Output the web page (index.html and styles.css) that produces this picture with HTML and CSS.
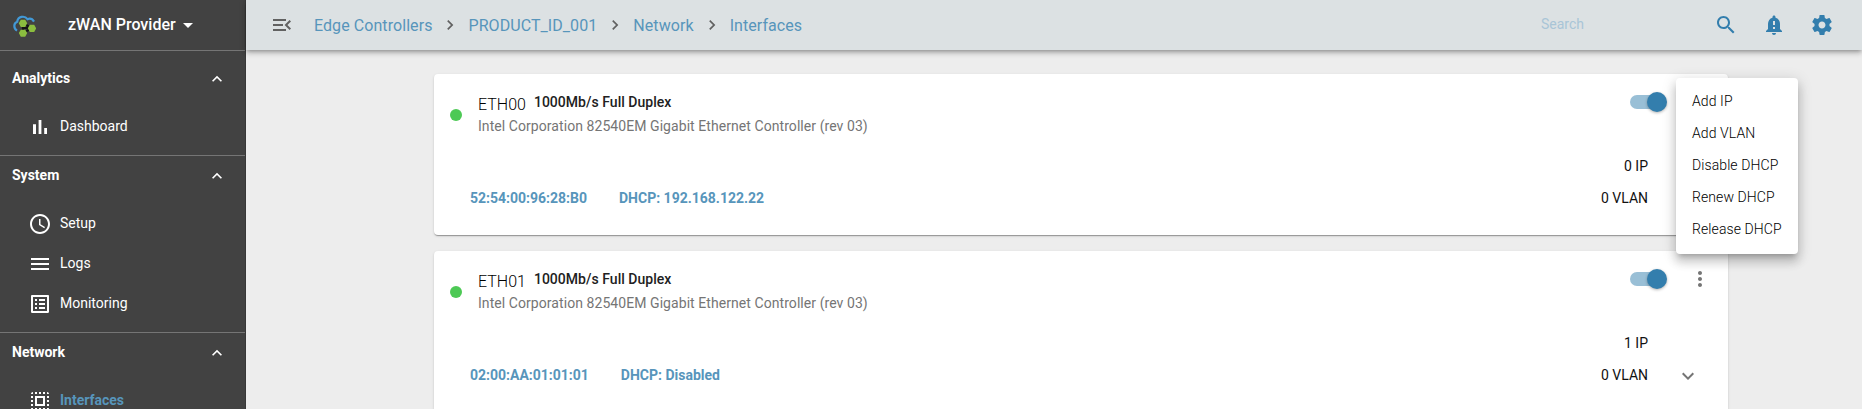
FILE: index.html
```html
<!DOCTYPE html>
<html lang="en">
<head>
<meta charset="utf-8">
<title>zWAN Provider</title>
<link rel="stylesheet" href="styles.css">
</head>
<body>
<div class="app">
  <aside class="sidebar">
    <div class="brand">
      <svg class="logo" width="24" height="24" viewBox="0 0 24 24">
        <path d="M5 16.600C1.600 14.500 1.200 9.500 5.200 7.800C5.800 2.500 12.500 1 15.500 5.200C18 4.200 20.500 5 22 7.600" fill="none" stroke="#4299d6" stroke-width="2.200"/>
        <path d="M11 9v10M11 9l8.500 5.300L11 19M11 14h8" fill="none" stroke="#151515" stroke-width="2.200"/>
        <path d="M8.800 5.700h4.400l2 3.600-2 3.600H8.800l-2-3.600zM8.800 15.700h4.400l2 3.400-2 3.600H8.800l-2-3.600zM17.800 10.700h4.400l2 3.600-2 3.600h-4.400l-2-3.600z" fill="#8bbd3f"/>
      </svg>
      <span class="brand-name">zWAN Provider</span>
      <svg class="icon" viewBox="0 0 24 24"><path d="M7 10l5 5 5-5z"/></svg>
    </div>
    <section class="group group-first">
      <div class="group-head">Analytics<svg class="chev" viewBox="0 0 24 24"><path d="M12 8l-6 6 1.410 1.410L12 10.830l4.590 4.580L18 14z"/></svg></div>
      <a class="item"><svg class="icon" viewBox="0 0 24 24"><path d="M5 9.200h3V19H5zM10.600 5h2.800v14h-2.800zm5.600 8H19v6h-2.800z"/></svg>Dashboard</a>
    </section>
    <section class="group">
      <div class="group-head">System<svg class="chev" viewBox="0 0 24 24"><path d="M12 8l-6 6 1.410 1.410L12 10.830l4.590 4.580L18 14z"/></svg></div>
      <a class="item"><svg class="icon" viewBox="0 0 24 24"><path d="M11.990 2C6.470 2 2 6.480 2 12s4.470 10 9.990 10C17.520 22 22 17.520 22 12S17.520 2 11.990 2zM12 20c-4.420 0-8-3.580-8-8s3.580-8 8-8 8 3.580 8 8-3.580 8-8 8zm.5-13H11v6l5.250 3.150.75-1.230-4.500-2.670z"/></svg>Setup</a>
      <a class="item"><svg class="icon" viewBox="0 0 24 24"><path d="M3 18h18v-2H3v2zm0-5h18v-2H3v2zm0-7v2h18V6H3z"/></svg>Logs</a>
      <a class="item"><svg class="icon" viewBox="0 0 24 24"><path d="M19 5v14H5V5h14m1.100-2H3.900c-.5 0-.9.400-.9.900v16.200c0 .400.400.900.900.900h16.200c.4 0 .9-.5.900-.9V3.900c0-.5-.5-.9-.9-.9zM11 7h6v2h-6V7zm0 4h6v2h-6v-2zm0 4h6v2h-6zM7 7h2v2H7zm0 4h2v2H7zm0 4h2v2H7z"/></svg>Monitoring</a>
    </section>
    <section class="group">
      <div class="group-head">Network<svg class="chev" viewBox="0 0 24 24"><path d="M12 8l-6 6 1.410 1.410L12 10.830l4.590 4.580L18 14z"/></svg></div>
      <a class="item active"><svg class="icon" viewBox="0 0 24 24"><path d="M3 5h2V3c-1.100 0-2 .9-2 2zm0 8h2v-2H3v2zm4 8h2v-2H7v2zM3 9h2V7H3v2zm10-6h-2v2h2V3zm6 0v2h2c0-1.100-.9-2-2-2zM5 21v-2H3c0 1.100.9 2 2 2zm-2-4h2v-2H3v2zM9 3H7v2h2V3zm2 18h2v-2h-2v2zm8-8h2v-2h-2v2zm0 8c1.100 0 2-.9 2-2h-2v2zm0-12h2V7h-2v2zm0 8h2v-2h-2v2zm-4 4h2v-2h-2v2zm0-16h2V3h-2v2zM7 17h10V7H7v10zm2-8h6v6H9V9z"/></svg>Interfaces</a>
    </section>
  </aside>
  <div class="page">
    <header class="topbar">
      <svg class="icon grey" viewBox="0 0 24 24"><path d="M3 18h13v-2H3v2zm0-5h10v-2H3v2zm0-7v2h13V6H3zm18 9.590L17.420 12 21 8.410 19.590 7l-5 5 5 5L21 15.590z"/></svg>
      <nav class="crumbs">
        <a>Edge Controllers</a>
        <svg class="crumb-sep" viewBox="0 0 24 24"><path d="M10 6L8.590 7.410 13.170 12l-4.580 4.590L10 18l6-6z"/></svg>
        <a>PRODUCT_ID_001</a>
        <svg class="crumb-sep" viewBox="0 0 24 24"><path d="M10 6L8.590 7.410 13.170 12l-4.580 4.590L10 18l6-6z"/></svg>
        <a>Network</a>
        <svg class="crumb-sep" viewBox="0 0 24 24"><path d="M10 6L8.590 7.410 13.170 12l-4.580 4.590L10 18l6-6z"/></svg>
        <a>Interfaces</a>
      </nav>
      <div class="tools">
        <span class="search">Search</span>
        <svg class="icon" viewBox="0 0 24 24"><path d="M15.500 14h-.79l-.28-.27C15.410 12.590 16 11.110 16 9.500 16 5.910 13.090 3 9.500 3S3 5.910 3 9.500 5.910 16 9.500 16c1.610 0 3.090-.59 4.230-1.570l.27.28v.79l5 4.990L20.490 19l-4.990-5zm-6 0C7.010 14 5 11.990 5 9.500S7.010 5 9.500 5 14 7.010 14 9.500 11.990 14 9.500 14z"/></svg>
        <svg class="icon" viewBox="0 0 24 24"><path d="M18 16v-5c0-3.070-1.640-5.640-4.500-6.320V4c0-.83-.67-1.500-1.500-1.500s-1.500.67-1.500 1.500v.68C7.630 5.360 6 7.920 6 11v5l-2 2v1h16v-1l-2-2zm-5 0h-2v-2h2v2zm0-4h-2V8h2v4zm-1 10c1.100 0 2-.9 2-2h-4c0 1.100.9 2 2 2z"/></svg>
        <svg class="icon" viewBox="0 0 24 24"><path d="M19.430 12.980c.04-.32.070-.64.070-.98s-.03-.66-.07-.98l2.110-1.650c.19-.15.240-.42.120-.64l-2-3.460c-.12-.22-.39-.3-.61-.22l-2.490 1c-.52-.4-1.080-.73-1.690-.98l-.38-2.650C14.460 2.180 14.250 2 14 2h-4c-.25 0-.46.180-.49.420l-.38 2.650c-.61.250-1.170.59-1.690.98l-2.490-1c-.23-.09-.49 0-.61.220l-2 3.460c-.13.220-.07.490.12.640l2.110 1.650c-.04.320-.07.650-.07.980s.03.660.07.980l-2.110 1.650c-.19.150-.24.420-.12.640l2 3.460c.12.220.39.300.61.220l2.490-1c.52.400 1.080.73 1.690.98l.38 2.650c.03.240.24.420.49.420h4c.25 0 .46-.18.490-.42l.38-2.650c.61-.25 1.170-.59 1.690-.98l2.490 1c.23.090.49 0 .61-.22l2-3.460c.12-.22.070-.49-.12-.64l-2.110-1.650zM12 15.500c-1.930 0-3.500-1.570-3.500-3.500s1.570-3.500 3.500-3.500 3.500 1.570 3.500 3.500-1.570 3.500-3.500 3.500z"/></svg>
      </div>
    </header>
    <main class="content">
      <article class="card">
        <div class="card-top">
          <span class="status"></span>
          <div class="info">
            <div class="title"><span class="port">ETH00</span><span class="speed">1000Mb/s Full Duplex</span></div>
            <div class="desc">Intel Corporation 82540EM Gigabit Ethernet Controller (rev 03)</div>
          </div>
          <span class="toggle"><span class="thumb"></span></span>
          <div class="more">
            <svg class="icon" viewBox="0 0 24 24"><path d="M12 8c1.100 0 2-.9 2-2s-.9-2-2-2-2 .9-2 2 .9 2 2 2zm0 2c-1.100 0-2 .9-2 2s.9 2 2 2 2-.9 2-2-.9-2-2-2zm0 6c-1.100 0-2 .9-2 2s.9 2 2 2 2-.9 2-2-.9-2-2-2z"/></svg>
            <ul class="menu">
              <li>Add IP</li>
              <li>Add VLAN</li>
              <li>Disable DHCP</li>
              <li>Renew DHCP</li>
              <li>Release DHCP</li>
            </ul>
          </div>
        </div>
        <div class="card-bottom">
          <div class="addr"><span>52:54:00:96:28:B0</span><span>DHCP: 192.168.122.22</span></div>
          <div class="counts"><span>0 IP</span><span>0 VLAN</span></div>
          <div class="expand"></div>
        </div>
      </article>
      <article class="card">
        <div class="card-top">
          <span class="status"></span>
          <div class="info">
            <div class="title"><span class="port">ETH01</span><span class="speed">1000Mb/s Full Duplex</span></div>
            <div class="desc">Intel Corporation 82540EM Gigabit Ethernet Controller (rev 03)</div>
          </div>
          <span class="toggle"><span class="thumb"></span></span>
          <div class="more">
            <svg class="icon" viewBox="0 0 24 24"><path d="M12 8c1.100 0 2-.9 2-2s-.9-2-2-2-2 .9-2 2 .9 2 2 2zm0 2c-1.100 0-2 .9-2 2s.9 2 2 2 2-.9 2-2-.9-2-2-2zm0 6c-1.100 0-2 .9-2 2s.9 2 2 2 2-.9 2-2-.9-2-2-2z"/></svg>
          </div>
        </div>
        <div class="card-bottom">
          <div class="addr"><span>02:00:AA:01:01:01</span><span>DHCP: Disabled</span></div>
          <div class="counts"><span>1 IP</span><span>0 VLAN</span></div>
          <div class="expand"><svg class="icon" viewBox="0 0 24 24"><path d="M16.590 8.590L12 13.170 7.410 8.590 6 10l6 6 6-6z"/></svg></div>
        </div>
      </article>
    </main>
  </div>
</div>
</body>
</html>
```

FILE: styles.css
```css
* { box-sizing: border-box; }
body {
  margin: 0;
  background: #fff;
  font-family: Roboto, sans-serif;
  font-size: 14px;
  color: #212121;
}
.app {
  display: flex;
  width: 1862px;
  height: 409px;
  overflow: hidden;
  background: #ededed;
}
.icon { width: 24px; height: 24px; fill: currentColor; flex: none; display: block; }

.sidebar {
  width: 246px;
  flex: none;
  background: #424242;
  border-right: 1px solid #383838;
  color: #fff;
}
.brand { display: flex; align-items: center; height: 50px; padding-left: 12px; }
.logo { flex: none; display: block; margin-top: 2px; }
.brand-name { margin: -1px 0 0 32px; font-size: 16px; font-weight: 500; }
.brand .icon { color: #fff; }
.group { border-top: 1px solid #757575; padding-bottom: 8px; }
.group-first { padding-top: 8px; }
.group-head {
  display: flex;
  align-items: center;
  justify-content: space-between;
  height: 40px;
  margin-bottom: 8px;
  padding: 0 18px 2px 12px;
  font-weight: 700;
}
.chev { width: 20px; height: 20px; margin-top: 2px; fill: #fff; }
.item { display: flex; align-items: center; gap: 8px; height: 40px; padding: 0 0 2px 28px; }
.item .icon { margin-top: 2px; }
.active { color: #5795bb; font-weight: 700; }
.active .icon { color: #fff; }

.page { flex: 1; min-width: 0; }
.topbar {
  position: relative;
  display: flex;
  align-items: center;
  height: 50px;
  padding: 0 28px 0 24px;
  background: #dce1e3;
  box-shadow: 0 2px 4px -1px rgba(0,0,0,.3), 0 4px 5px rgba(0,0,0,.1), 0 1px 8px rgba(0,0,0,.1);
}
.grey { color: #616161; }
.crumbs { display: flex; align-items: center; gap: 8px; margin-left: 20px; font-size: 16px; letter-spacing: .07px; color: #5795bb; }
.crumb-sep { width: 20px; height: 20px; fill: #616161; }
.tools { display: flex; align-items: center; gap: 24px; margin-left: auto; color: #337ead; }
.search { width: 149px; margin-top: -2px; color: #a9c5d7; }

.content { display: flex; flex-direction: column; gap: 16px; width: 1294px; margin: 24px 0 0 188px; }
.card {
  height: 161px;
  flex: none;
  border-radius: 4px;
  background: #fff;
  box-shadow: 0 2px 1px -1px rgba(0,0,0,.2), 0 1px 1px rgba(0,0,0,.14), 0 1px 3px rgba(0,0,0,.12);
}
.card-top { display: flex; height: 76px; padding: 16px 16px 0; }
.status { width: 12px; height: 12px; margin-top: 19px; border-radius: 50%; background: #4dc955; flex: none; }
.info { margin-left: 16px; flex: 1; }
.title { display: flex; height: 24px; }
.port { padding-top: 3px; font-size: 16px; font-weight: 300; line-height: 24px; color: #000; }
.speed { margin-left: 8px; font-weight: 500; line-height: 24px; letter-spacing: .03px; }
.desc { color: #757575; line-height: 24px; letter-spacing: .065px; }
.toggle { display: flex; align-items: center; justify-content: flex-end; width: 36px; height: 14px; margin: 5px 22px 0 0; border-radius: 7px; background: #99bfd6; }
.thumb { width: 20px; height: 20px; margin-right: -1px; flex: none; border-radius: 50%; background: #337ead; box-shadow: 0 1px 3px rgba(0,0,0,.3); }
.more { position: relative; width: 24px; height: 24px; color: #757575; }
.menu {
  position: absolute;
  z-index: 2;
  top: -12px;
  left: -12px;
  width: 122px;
  margin: 0;
  padding: 8px 0;
  list-style: none;
  border-radius: 4px;
  background: #fff;
  color: #000;
  font-weight: 300;
  letter-spacing: .09px;
  box-shadow: 0 5px 5px -3px rgba(0,0,0,.2), 0 8px 10px 1px rgba(0,0,0,.14), 0 3px 14px 2px rgba(0,0,0,.12);
}
.menu li { height: 32px; padding-left: 16px; line-height: 31px; }
.card-bottom { display: flex; align-items: flex-end; height: 64px; padding: 0 28px 0 36px; }
.addr { display: flex; gap: 32px; flex: 1; color: #5795bb; font-weight: 700; line-height: 32px; }
.counts { display: flex; flex-direction: column; text-align: right; line-height: 32px; color: #111; }
.expand { width: 24px; height: 24px; margin: 0 0 3px 28px; color: #757575; }
```
